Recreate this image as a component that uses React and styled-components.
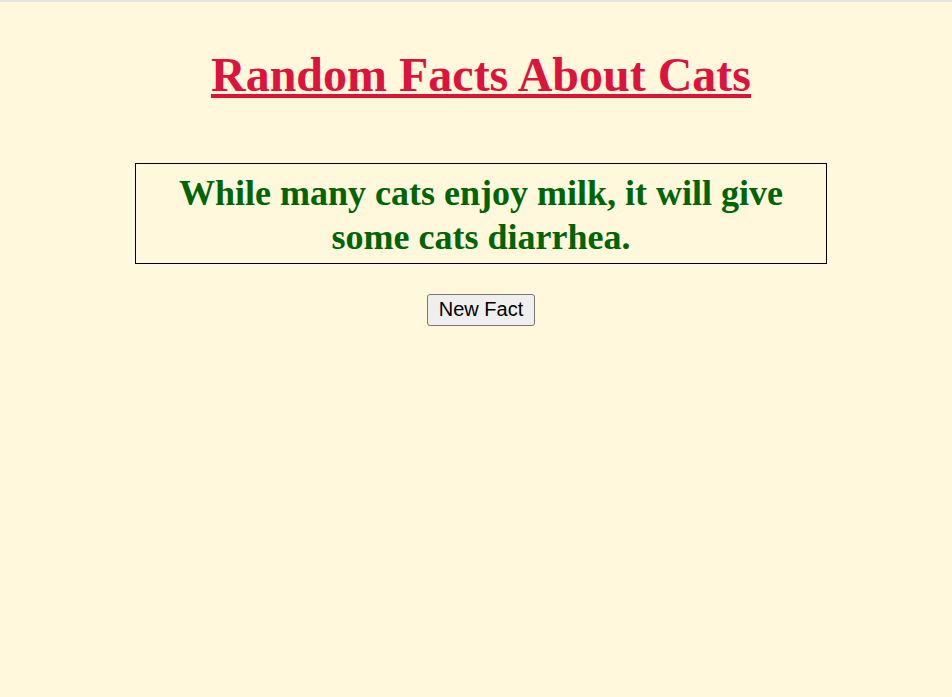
import React, { useState } from 'react'
import styled, { createGlobalStyle } from 'styled-components'

const facts = [
  'While many cats enjoy milk, it will give some cats diarrhea.',
  'Cats sleep for around 13 to 16 hours a day.',
  'A group of cats is called a clowder.',
]

const GlobalStyle = createGlobalStyle`
  html, body {
    background: #fff8dc;
  }
  body {
    margin: 0;
    border-top: 2px solid #e3e3e3;
    font-family: "Liberation Serif", "Times New Roman", serif;
  }
`

const Page = styled.main`
  display: flex;
  flex-direction: column;
  align-items: center;
  padding: 0 0 0 10px;
`

const Title = styled.h1`
  margin: 45px 0 61px;
  color: #dc143c;
  font-size: 48px;
  font-weight: bold;
  text-decoration: underline;
  text-align: center;
`

const FactBox = styled.div`
  width: 690px;
  border: 1px solid #000;
  padding: 7px 0 4px;
`

const FactText = styled.h2`
  margin: 0;
  color: #006400;
  font-size: 36px;
  line-height: 44px;
  text-align: center;
`

const Button = styled.button`
  margin-top: 30px;
  padding: 3px 11px 4px;
  font-family: "Liberation Sans", Arial, sans-serif;
  font-size: 20px;
  color: #000;
  background: #efefef;
  border: 1px solid #767676;
  border-radius: 3px;
`

const App = () => {
  const [index, setIndex] = useState(0)
  return (
    <>
      <GlobalStyle />
      <Page>
        <Title>Random Facts About Cats</Title>
        <FactBox>
          <FactText>{facts[index]}</FactText>
        </FactBox>
        <Button onClick={() => setIndex((index + 1) % facts.length)}>New Fact</Button>
      </Page>
    </>
  )
}

export default App
